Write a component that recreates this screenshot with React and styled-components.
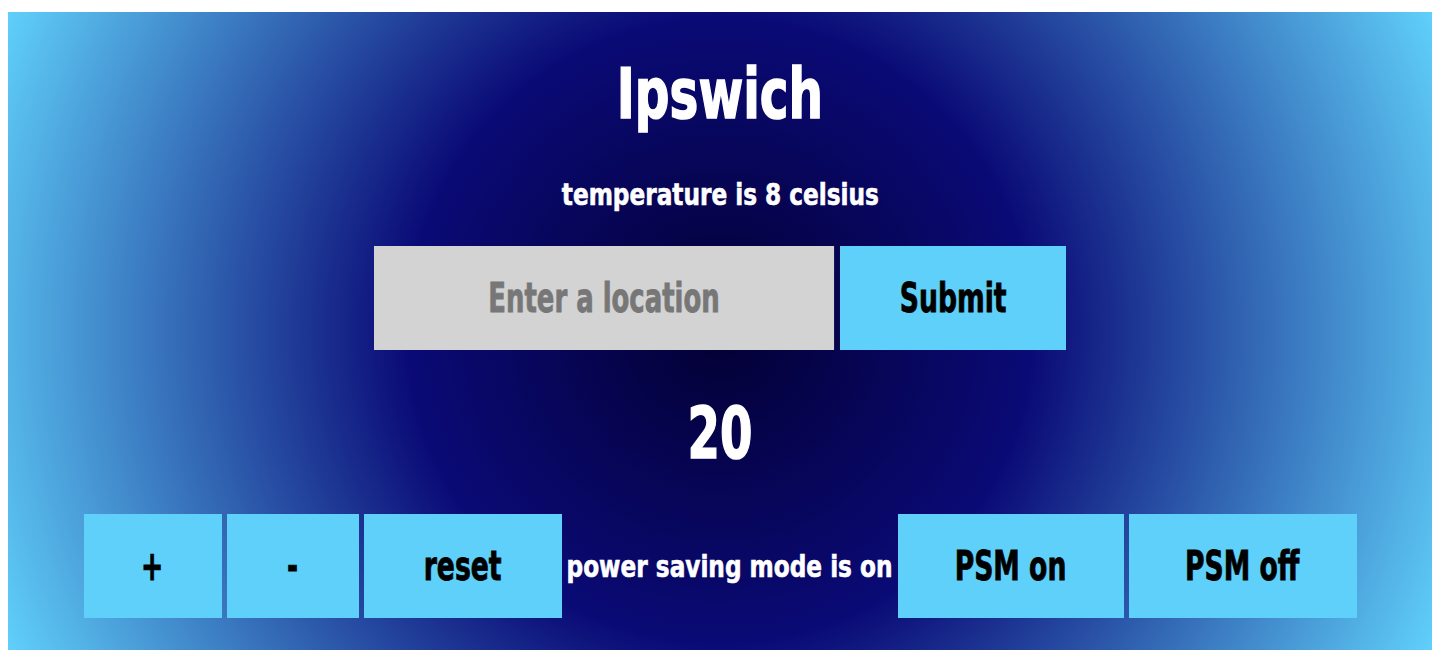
import React, { useState } from 'react';
import styled, { createGlobalStyle } from 'styled-components';

const buttonBlue = '#5fd0f9';
const fontStack = '"DejaVu Sans Condensed", "DejaVu Sans", "Liberation Sans", sans-serif';

const GlobalStyle = createGlobalStyle`
  body {
    margin: 12px 14px 8px 8px;
    font-family: ${fontStack};
  }
`;

const Page = styled.div`
  display: flex;
  flex-direction: column;
  align-items: center;
  padding: 47px 0 32px;
  background: radial-gradient(circle, #030034 0%, #0a0a76 40%, #60d0fa 100%);
  color: white;
  font-weight: 700;
`;

const City = styled.h1`
  margin: 0;
  font-size: 70px;
  line-height: 70px;
  font-weight: 700;
  -webkit-text-stroke: 1.5px white;
  transform: scaleX(0.77);
`;

const Temp = styled.p`
  margin: 51px 0 0;
  font-size: 30px;
  line-height: 30px;
  -webkit-text-stroke: 0.6px white;
  transform: scaleX(0.86);
`;

const SearchRow = styled.form`
  display: flex;
  gap: 6px;
  margin-top: 36px;
`;

const InputBox = styled.div`
  width: 460px;
  height: 104px;
`;

const LocationInput = styled.input`
  box-sizing: border-box;
  width: ${460 / 0.72}px;
  height: 104px;
  border: none;
  outline: none;
  background: #d3d3d3;
  text-align: center;
  font-family: ${fontStack};
  font-weight: 700;
  font-size: 40px;
  color: #222;
  transform: scaleX(0.72);
  transform-origin: left center;
  &::placeholder {
    color: #777;
    -webkit-text-stroke: 0.8px #777;
  }
`;

const Button = styled.button`
  box-sizing: border-box;
  width: ${p => p.$w}px;
  height: 104px;
  padding: 0;
  border: none;
  background: ${buttonBlue};
  color: black;
  font-family: ${fontStack};
  font-weight: 700;
  font-size: 40px;
  white-space: nowrap;
  -webkit-text-stroke: 0.8px black;
  cursor: pointer;
`;

const Squeeze = styled.span`
  display: inline-block;
  transform: scaleX(${p => p.$s || 0.74});
`;

const Count = styled.div`
  margin-top: 47px;
  font-size: 72px;
  line-height: 72px;
  -webkit-text-stroke: 1.5px white;
  transform: scaleX(0.72);
`;

const Controls = styled.div`
  display: flex;
  align-items: center;
  gap: 5px;
  margin-top: 45px;
`;

const Status = styled.div`
  display: flex;
  justify-content: center;
  width: 326px;
  font-size: 30px;
  white-space: nowrap;
  -webkit-text-stroke: 0.6px white;
`;

const App = () => {
  const [count, setCount] = useState(20);
  const [psm, setPsm] = useState(true);

  return (
    <>
      <GlobalStyle />
      <Page>
        <City>Ipswich</City>
        <Temp>temperature is 8 celsius</Temp>
        <SearchRow onSubmit={e => e.preventDefault()}>
          <InputBox>
            <LocationInput placeholder="Enter a location" />
          </InputBox>
          <Button $w={226} type="submit"><Squeeze>Submit</Squeeze></Button>
        </SearchRow>
        <Count>{count}</Count>
        <Controls>
          <Button $w={138} onClick={() => setCount(count + 1)}><Squeeze>+</Squeeze></Button>
          <Button $w={132} onClick={() => setCount(count - 1)}><Squeeze>-</Squeeze></Button>
          <Button $w={198} onClick={() => setCount(20)}><Squeeze>reset</Squeeze></Button>
          <Status><Squeeze $s={0.86}>power saving mode is {psm ? 'on' : 'off'}</Squeeze></Status>
          <Button $w={226} onClick={() => setPsm(true)}><Squeeze>PSM on</Squeeze></Button>
          <Button $w={228} onClick={() => setPsm(false)}><Squeeze>PSM off</Squeeze></Button>
        </Controls>
      </Page>
    </>
  );
};

export default App;
